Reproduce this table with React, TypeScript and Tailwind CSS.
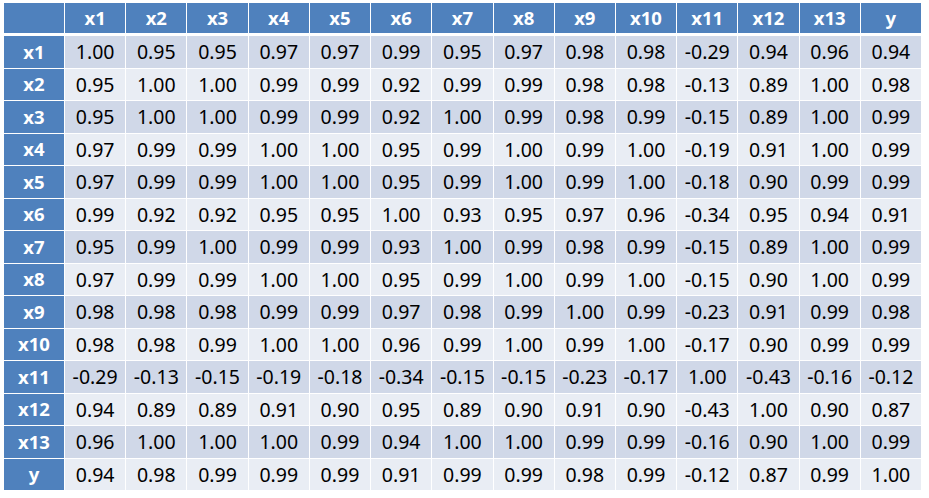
import React from "react";

const labels = ["x1","x2","x3","x4","x5","x6","x7","x8","x9","x10","x11","x12","x13","y"];
const data: string[][] = [
  ["1.00","0.95","0.95","0.97","0.97","0.99","0.95","0.97","0.98","0.98","-0.29","0.94","0.96","0.94"],
  ["0.95","1.00","1.00","0.99","0.99","0.92","0.99","0.99","0.98","0.98","-0.13","0.89","1.00","0.98"],
  ["0.95","1.00","1.00","0.99","0.99","0.92","1.00","0.99","0.98","0.99","-0.15","0.89","1.00","0.99"],
  ["0.97","0.99","0.99","1.00","1.00","0.95","0.99","1.00","0.99","1.00","-0.19","0.91","1.00","0.99"],
  ["0.97","0.99","0.99","1.00","1.00","0.95","0.99","1.00","0.99","1.00","-0.18","0.90","0.99","0.99"],
  ["0.99","0.92","0.92","0.95","0.95","1.00","0.93","0.95","0.97","0.96","-0.34","0.95","0.94","0.91"],
  ["0.95","0.99","1.00","0.99","0.99","0.93","1.00","0.99","0.98","0.99","-0.15","0.89","1.00","0.99"],
  ["0.97","0.99","0.99","1.00","1.00","0.95","0.99","1.00","0.99","1.00","-0.15","0.90","1.00","0.99"],
  ["0.98","0.98","0.98","0.99","0.99","0.97","0.98","0.99","1.00","0.99","-0.23","0.91","0.99","0.98"],
  ["0.98","0.98","0.99","1.00","1.00","0.96","0.99","1.00","0.99","1.00","-0.17","0.90","0.99","0.99"],
  ["-0.29","-0.13","-0.15","-0.19","-0.18","-0.34","-0.15","-0.15","-0.23","-0.17","1.00","-0.43","-0.16","-0.12"],
  ["0.94","0.89","0.89","0.91","0.90","0.95","0.89","0.90","0.91","0.90","-0.43","1.00","0.90","0.87"],
  ["0.96","1.00","1.00","1.00","0.99","0.94","1.00","1.00","0.99","0.99","-0.16","0.90","1.00","0.99"],
  ["0.94","0.98","0.99","0.99","0.99","0.91","0.99","0.99","0.98","0.99","-0.12","0.87","0.99","1.00"],
];

export default function App() {
  return (
    <div className="w-[929px] h-[498px] bg-white pl-[4px] pt-[3px]" style={{ fontFamily: '"Noto Sans", "Open Sans", sans-serif' }}>
      <div className="w-[917px] flex flex-col">
        <div className="grid grid-cols-[60px_repeat(14,minmax(0,1fr))] gap-x-px h-[30px] mb-[3px]">
          <div className="bg-[#4F81BD]" />
          {labels.map((l) => (
            <div key={l} className="bg-[#4F81BD] text-white font-bold text-[18.5px] flex items-center justify-center leading-none">
              {l}
            </div>
          ))}
        </div>
        <div className="flex flex-col gap-y-px">
          {data.map((row, i) => (
            <div key={i} className="grid grid-cols-[60px_repeat(14,minmax(0,1fr))] gap-x-px h-[31.5px]">
              <div className="bg-[#4F81BD] text-white font-bold text-[18.5px] flex items-center justify-center leading-none">
                {labels[i]}
              </div>
              {row.map((v, j) => (
                <div
                  key={j}
                  className={`${i % 2 === 0 ? "bg-[#D0D8E8]" : "bg-[#E9EDF4]"} text-black text-[19.5px] flex items-center justify-center leading-none`}
                >
                  {v}
                </div>
              ))}
            </div>
          ))}
        </div>
      </div>
    </div>
  );
}
